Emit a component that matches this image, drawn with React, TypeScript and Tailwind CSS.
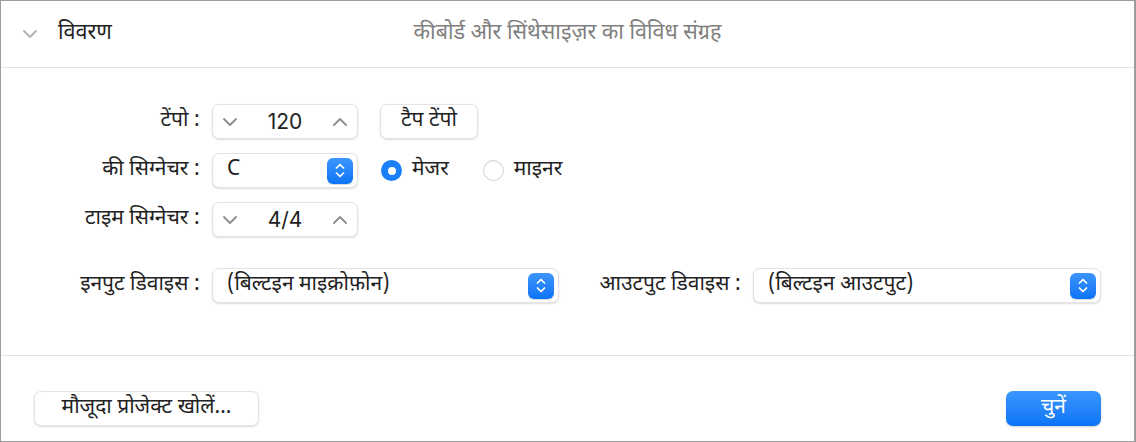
import React from 'react'

const font = { fontFamily: '"Noto Sans Devanagari", "Noto Sans", "Liberation Sans", sans-serif' }

function Chevron({ up = false, className = '' }: { up?: boolean; className?: string }) {
  return (
    <svg width="16" height="10" viewBox="0 0 16 10" className={className} fill="none">
      <path
        d={up ? 'M2 8 L8 2 L14 8' : 'M2 2 L8 8 L14 2'}
        stroke="currentColor"
        strokeWidth="1.8"
        strokeLinecap="round"
        strokeLinejoin="round"
      />
    </svg>
  )
}

function PopupArrows() {
  return (
    <div className="w-[26px] h-[26px] rounded-[6px] bg-gradient-to-b from-[#3b95fd] to-[#0a74f6] flex flex-col items-center justify-center gap-[3px] shadow-[0_1px_1px_rgba(0,0,0,0.15)]">
      <svg width="10" height="6" viewBox="0 0 10 6" fill="none">
        <path d="M1.5 5 L5 1.5 L8.5 5" stroke="white" strokeWidth="1.7" strokeLinecap="round" strokeLinejoin="round" />
      </svg>
      <svg width="10" height="6" viewBox="0 0 10 6" fill="none">
        <path d="M1.5 1 L5 4.5 L8.5 1" stroke="white" strokeWidth="1.7" strokeLinecap="round" strokeLinejoin="round" />
      </svg>
    </div>
  )
}

const boxCls =
  'h-[35px] rounded-[7px] bg-white border border-[#e3e3e3] shadow-[0_1px_2px_rgba(0,0,0,0.14)] flex items-center'

function Stepper({ value }: { value: string }) {
  return (
    <div className={`${boxCls} w-[146px] justify-between px-[9px]`}>
      <Chevron className="text-[#8c8c8c]" />
      <span className="text-[21px] text-[#222]" style={{ fontFamily: '"Inter", "Liberation Sans", sans-serif' }}>
        {value}
      </span>
      <Chevron up className="text-[#8c8c8c]" />
    </div>
  )
}

function Popup({ value, width }: { value: string; width: string }) {
  return (
    <div className={`${boxCls} ${width} justify-between pl-[14px] pr-[4px]`}>
      <span className="text-[21px] text-[#222]">{value}</span>
      <PopupArrows />
    </div>
  )
}

function Radio({ checked, label }: { checked: boolean; label: string }) {
  return (
    <div className="flex items-center gap-[10px]">
      {checked ? (
        <div className="w-[21px] h-[21px] rounded-full bg-[#1a80fa] flex items-center justify-center">
          <div className="w-[8px] h-[8px] rounded-full bg-white" />
        </div>
      ) : (
        <div className="w-[21px] h-[21px] rounded-full bg-white border border-[#cfcfcf] shadow-[inset_0_1px_1px_rgba(0,0,0,0.05)]" />
      )}
      <span className="text-[21px] text-[#222]">{label}</span>
    </div>
  )
}

function Label({ children }: { children: React.ReactNode }) {
  return <span className="text-[21px] text-[#222] text-right whitespace-nowrap">{children}</span>
}

export default function App() {
  return (
    <div className="w-[1136px] h-[442px] bg-white border border-[#9c9c9c] border-r-2 flex flex-col" style={font}>
      {/* header */}
      <div className="h-[67px] shrink-0 border-b border-[#e2e2e2] grid grid-cols-[1fr_auto_1fr] items-center">
        <div className="flex items-center">
          <Chevron className="text-[#b0b0b0] ml-[21px] mr-[20px]" />
          <span className="text-[21.5px] text-[#222]">विवरण</span>
        </div>
        <span className="text-[21.5px] text-[#808080]">कीबोर्ड और सिंथेसाइज़र का विविध संग्रह</span>
        <div />
      </div>

      {/* body */}
      <div className="flex-1 pt-[36px] flex flex-col">
        <div className="grid grid-cols-[199px_auto] gap-x-[12px] gap-y-[14px] items-center">
          <Label>टेंपो :</Label>
          <div className="flex items-center gap-[22px]">
            <Stepper value="120" />
            <button className={`${boxCls} w-[98px] justify-center text-[21px] text-[#222]`}>टैप टेंपो</button>
          </div>

          <Label>की सिग्नेचर :</Label>
          <div className="flex items-center">
            <Popup value="C" width="w-[146px]" />
            <div className="ml-[23px] flex items-center gap-[34px]">
              <Radio checked label="मेजर" />
              <Radio checked={false} label="माइनर" />
            </div>
          </div>

          <Label>टाइम सिग्नेचर :</Label>
          <div className="flex items-center">
            <Stepper value="4/4" />
          </div>
        </div>

        <div className="mt-[31px] grid grid-cols-[199px_347px_170px_348px] gap-x-[12px] items-center">
          <Label>इनपुट डिवाइस :</Label>
          <Popup value="(बिल्टइन माइक्रोफ़ोन)" width="w-[347px]" />
          <Label>आउटपुट डिवाइस :</Label>
          <Popup value="(बिल्टइन आउटपुट)" width="w-[348px]" />
        </div>
      </div>

      {/* footer */}
      <div className="h-[86px] shrink-0 border-t border-[#e2e2e2] flex items-start justify-between pt-[35px] pl-[33px] pr-[33px]">
        <button className={`${boxCls} w-[225px] justify-center text-[21px] text-[#222]`}>मौजूदा प्रोजेक्ट खोलें...</button>
        <button className="h-[35px] w-[95px] rounded-[7px] bg-gradient-to-b from-[#3a96fd] to-[#0a74f6] shadow-[0_1px_2px_rgba(0,0,0,0.2)] text-white text-[21px] flex items-center justify-center">
          चुनें
        </button>
      </div>
    </div>
  )
}
